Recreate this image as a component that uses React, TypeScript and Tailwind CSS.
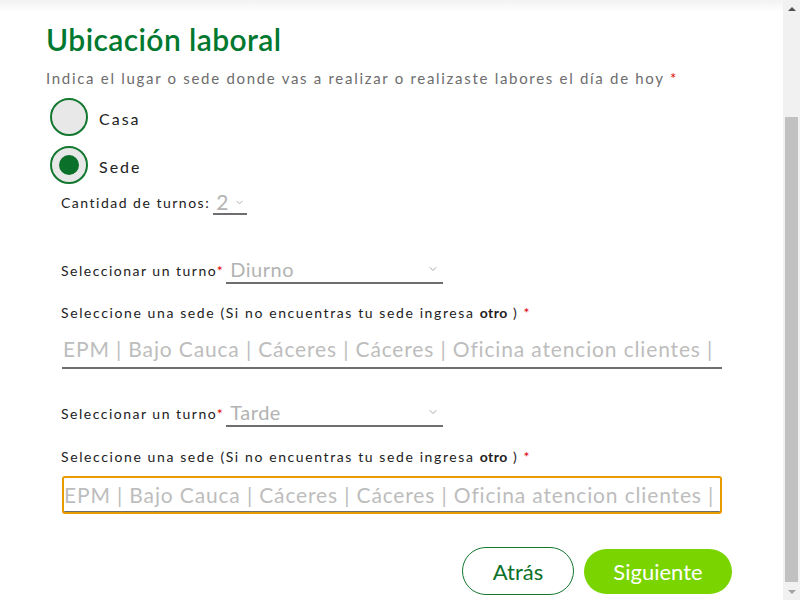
import { ChevronDown } from "lucide-react";

const font = { fontFamily: "Lato, 'Open Sans', sans-serif" };

function Radio({ label, checked }: { label: string; checked?: boolean }) {
  return (
    <label className="flex h-[38px] items-center gap-[11px] pl-[4px]">
      <span className="flex h-[38px] w-[38px] items-center justify-center rounded-full border-2 border-[#12782f] bg-[#e8e8e8]">
        {checked && <span className="h-[20px] w-[20px] rounded-full bg-[#0b7029]" />}
      </span>
      <span className="pt-[3px] text-[16px] tracking-[2px] text-[#222]">{label}</span>
    </label>
  );
}

function TurnoSelect({ value }: { value: string }) {
  return (
    <div className="flex items-end pl-[15px]">
      <span className="pb-[3px] text-[14px] leading-[20px] tracking-[1.5px] text-[#222]">
        Seleccionar un turno<span className="text-[#e00000]">*</span>
      </span>
      <div className="ml-[2px] flex h-[28px] w-[217px] items-center justify-between border-b-2 border-[#6e6e70] pl-[4px] pr-[4px]">
        <span className="text-[20px] leading-[24px] tracking-[0.5px] text-[#b3b3b3]">{value}</span>
        <ChevronDown className="h-[12px] w-[12px] text-[#a8a8a8]" strokeWidth={2} />
      </div>
    </div>
  );
}

function SedeLabel() {
  return (
    <p className="pl-[15px] text-[14px] leading-[20px] tracking-[1.6px] text-[#222]">
      Seleccione una sede (Si no encuentras tu sede ingresa <b className="font-bold tracking-[0.5px]">otro</b> ){" "}
      <span className="text-[#e00000]">*</span>
    </p>
  );
}

const sedes = "EPM | Bajo Cauca | Cáceres | Cáceres | Oficina atencion clientes |";

export default function App() {
  return (
    <div className="flex h-[600px] w-[800px] overflow-hidden bg-white" style={font}>
      <div className="relative flex-1">
        <div className="absolute inset-x-0 top-0 h-[12px] bg-gradient-to-b from-black/5 to-transparent" />
        <div className="pl-[46px] pr-[61px] pt-[22px]">
          <h1 className="text-[30px] font-semibold leading-[34px] tracking-[0.4px] text-[#00782f]">Ubicación laboral</h1>
          <p className="mt-[12px] text-[15px] leading-[20px] tracking-[1.7px] text-[#6d6d6d]">
            Indica el lugar o sede donde vas a realizar o realizaste labores el día de hoy{" "}
            <span className="text-[#e00000]">*</span>
          </p>

          <div className="mt-[10px] flex flex-col gap-[10px]">
            <Radio label="Casa" />
            <Radio label="Sede" checked />
          </div>

          <div className="mt-[7px] flex items-end pl-[15px]">
            <span className="pb-[2px] text-[14px] leading-[20px] tracking-[1.5px] text-[#222]">Cantidad de turnos:</span>
            <div className="ml-[3px] flex h-[24px] w-[34px] items-center gap-[6px] border-b-2 border-[#6e6e70] pl-[3px]">
              <span className="text-[21px] leading-[24px] text-[#b3b3b3]">2</span>
              <ChevronDown className="h-[11px] w-[11px] text-[#a8a8a8]" strokeWidth={2} />
            </div>
          </div>

          <div className="mt-[41px]">
            <TurnoSelect value="Diurno" />
          </div>

          <div className="mt-[19px]">
            <SedeLabel />
          </div>
          <div className="ml-[16px] mt-[10px] flex h-[36px] items-center border-b-2 border-[#6e6e70] pb-[3px] pl-[1px]">
            <span className="whitespace-nowrap text-[21px] tracking-[0.85px] text-[#bdbdbd]">{sedes}</span>
          </div>

          <div className="mt-[30px]">
            <TurnoSelect value="Tarde" />
          </div>

          <div className="mt-[20px]">
            <SedeLabel />
          </div>
          <div className="ml-[16px] mt-[9px] overflow-hidden rounded-[3px] border-2 border-[#e89b00]">
            <div className="flex h-[34px] items-center border-b border-[#6e6e70]">
              <span className="whitespace-nowrap text-[21px] tracking-[0.85px] text-[#bdbdbd]">{sedes}</span>
            </div>
          </div>

          <div className="mt-[33px] flex items-center justify-end gap-[10px]">
            <button className="h-[48px] w-[112px] rounded-full border border-[#12782f] text-[22px] text-[#0b7029]">
              Atrás
            </button>
            <button className="-mr-[10px] h-[45px] w-[148px] rounded-full bg-[#79d400] text-[22px] text-white">
              Siguiente
            </button>
          </div>
        </div>
      </div>

      <div className="flex h-full w-[17px] flex-col items-center bg-[#f1f1f1]">
        <div className="flex h-[17px] w-full items-center justify-center">
          <span className="h-0 w-0 border-x-[4px] border-b-[4px] border-x-transparent border-b-[#505050]" />
        </div>
        <div className="mt-[100px] h-[465px] w-[13px] bg-[#c1c1c1]" />
        <div className="mt-auto flex h-[17px] w-full items-center justify-center">
          <span className="h-0 w-0 border-x-[4px] border-t-[4px] border-x-transparent border-t-[#a3a3a3]" />
        </div>
      </div>
    </div>
  );
}
